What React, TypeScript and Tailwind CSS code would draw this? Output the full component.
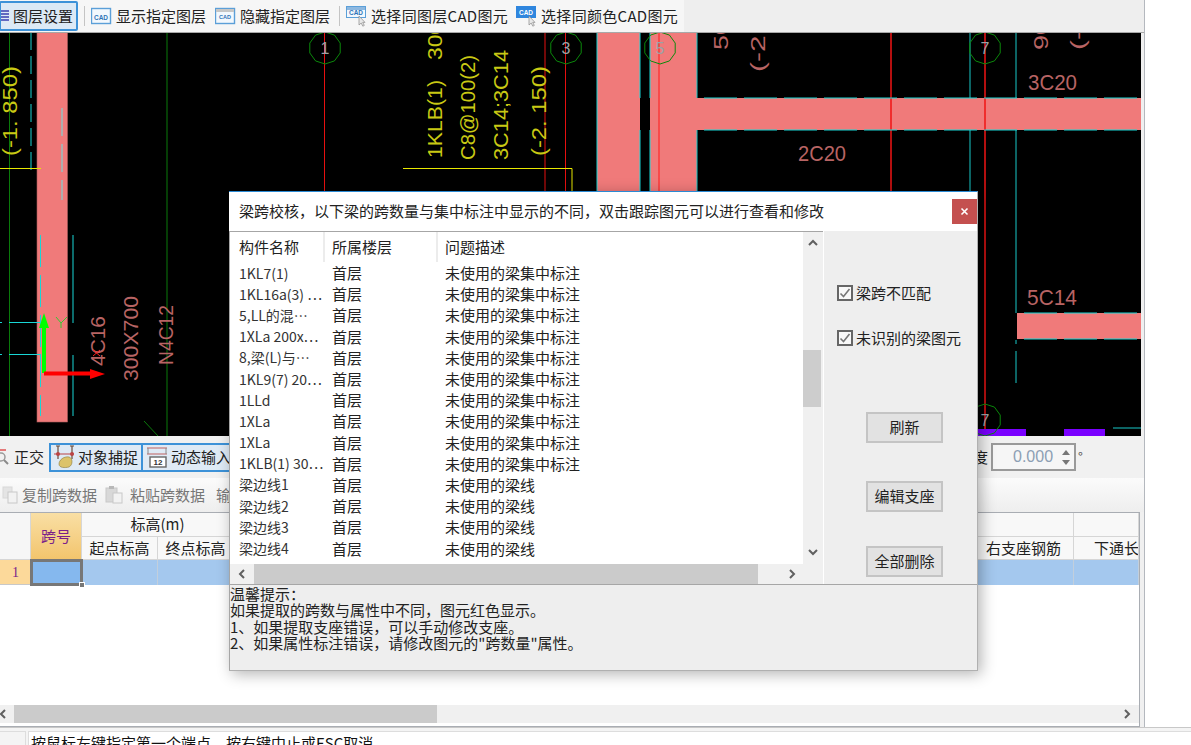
// App.tsx
import React from "react";

const FONT = `"Noto Sans CJK SC", "Noto Sans", sans-serif`;

const rows = [
  ["1KL7(1)", "未使用的梁集中标注"],
  ["1KL16a(3) …", "未使用的梁集中标注"],
  ["5,LL的混…", "未使用的梁集中标注"],
  ["1XLa 200x…", "未使用的梁集中标注"],
  ["8,梁(L)与…", "未使用的梁集中标注"],
  ["1KL9(7) 20…", "未使用的梁集中标注"],
  ["1LLd", "未使用的梁集中标注"],
  ["1XLa", "未使用的梁集中标注"],
  ["1XLa", "未使用的梁集中标注"],
  ["1KLB(1) 30…", "未使用的梁集中标注"],
  ["梁边线1", "未使用的梁线"],
  ["梁边线2", "未使用的梁线"],
  ["梁边线3", "未使用的梁线"],
  ["梁边线4", "未使用的梁线"],
];

function VText({ x, y, len, children, color = "#c9c914", size = 21 }: { x: number; y: number; len: number; children: string; color?: string; size?: number }) {
  return (
    <text
      transform={`rotate(-90 ${x} ${y})`}
      x={x}
      y={y}
      fill={color}
      fontSize={size}
      fontFamily="Liberation Sans, sans-serif"
      textLength={len}
      lengthAdjust="spacingAndGlyphs"
    >
      {children}
    </text>
  );
}

function AxisMark({ cx, cy, n }: { cx: number; cy: number; n: string }) {
  const pts = Array.from({ length: 10 }, (_, i) => {
    const a = (i * Math.PI) / 5 + Math.PI / 10;
    return `${cx + 16 * Math.cos(a)},${cy + 16 * Math.sin(a)}`;
  }).join(" ");
  return (
    <g>
      <polygon points={pts} fill="none" stroke="#0b8a0b" strokeWidth="1" />
      <text x={cx} y={cy + 6} textAnchor="middle" fill="#9aa3a8" fontSize="16" fontFamily="Liberation Sans, sans-serif">
        {n}
      </text>
    </g>
  );
}

function CadDrawing() {
  const dashes = (y: number, from: number, to: number) => (
    <line x1={from} x2={to} y1={y} y2={y} stroke="#19d6d6" strokeWidth="1" strokeDasharray="33 7" />
  );
  return (
    <svg width="1141" height="403" viewBox="0 33 1141 403" className="block bg-black">
      {/* beams */}
      <rect x="37" y="32" width="30.5" height="390" fill="#f07a7a" stroke="#a85a5a" strokeWidth="0.6" />
      <rect x="597" y="32" width="43" height="170" fill="#f07a7a" />
      <rect x="650" y="32" width="47" height="170" fill="#f07a7a" />
      <rect x="697" y="98" width="444" height="32" fill="#f07a7a" />
      <rect x="1017" y="313" width="124" height="26" fill="#f07a7a" />

      {/* grid lines */}
      <line x1="9.5" x2="9.5" y1="32" y2="436" stroke="#0a7a0a" />
      <line x1="167" x2="167" y1="32" y2="436" stroke="#0a7a0a" />
      <line x1="144" y1="421" x2="158" y2="436" stroke="#0a7a0a" />
      <line x1="324.5" x2="324.5" y1="32" y2="200" stroke="#e61010" />
      <line x1="545" x2="545" y1="32" y2="200" stroke="#e61010" />
      <line x1="565.5" x2="565.5" y1="32" y2="200" stroke="#e61010" />
      <line x1="659" x2="659" y1="32" y2="200" stroke="#ff1a1a" />
      <line x1="891" x2="891" y1="32" y2="200" stroke="#f01414" strokeWidth="1.5" />
      <line x1="985" x2="985" y1="32" y2="436" stroke="#f01414" strokeWidth="1.5" />

      {/* cyan edges */}
      <line x1="31" x2="31" y1="32" y2="170" stroke="#19d6d6" strokeDasharray="18 6" />
      <line x1="62" x2="62" y1="108" y2="200" stroke="#6fe0e0" strokeDasharray="28 8" />
      <line x1="40.5" x2="40.5" y1="235" y2="416" stroke="#19d6d6" strokeDasharray="32 8" />
      <line x1="73" x2="73" y1="235" y2="323" stroke="#19d6d6" />
      <line x1="73" x2="73" y1="355" y2="416" stroke="#19d6d6" />
      <line x1="0" x2="41" y1="322.5" y2="322.5" stroke="#19d6d6" strokeDasharray="2 7 40" />
      <line x1="0" x2="41" y1="354.5" y2="354.5" stroke="#19d6d6" strokeDasharray="2 7 40" />
      <line x1="597" x2="597" y1="32" y2="200" stroke="#19d6d6" />
      <line x1="640" x2="640" y1="32" y2="98" stroke="#19d6d6" />
      <line x1="640" x2="640" y1="130" y2="200" stroke="#19d6d6" />
      <line x1="650" x2="650" y1="32" y2="98" stroke="#19d6d6" />
      <line x1="650" x2="650" y1="130" y2="200" stroke="#19d6d6" />
      <line x1="697" x2="697" y1="32" y2="98" stroke="#19c8c8" />
      <line x1="697" x2="697" y1="130" y2="200" stroke="#19c8c8" />
      <line x1="970" x2="970" y1="32" y2="98" stroke="#19c8c8" />
      <line x1="970" x2="970" y1="130" y2="436" stroke="#19c8c8" />
      <line x1="1016" x2="1016" y1="32" y2="98" stroke="#19c8c8" />
      <line x1="1016" x2="1016" y1="130" y2="313" stroke="#19c8c8" />
      <line x1="1016" x2="1016" y1="340" y2="344" stroke="#19c8c8" />
      <line x1="1016" x2="1016" y1="351" y2="383" stroke="#19c8c8" />
      {dashes(98, 704, 1141)}
      {dashes(130, 704, 1141)}
      {dashes(313, 1024, 1141)}
      {dashes(339, 1024, 1141)}
      <line x1="1113" x2="1141" y1="428" y2="428" stroke="#19c8c8" />

      {/* purple strip */}
      <rect x="960" y="429" width="66" height="7" fill="#7a00ff" />
      <rect x="1064" y="429" width="41" height="7" fill="#7a00ff" />

      {/* leader lines */}
      <line x1="0" x2="41" y1="168.5" y2="168.5" stroke="#e8e800" />
      <polyline points="403,168.5 572,168.5 572,195" fill="none" stroke="#e8e800" />

      <AxisMark cx={325} cy={48} n="1" />
      <AxisMark cx={566} cy={48} n="3" />
      <AxisMark cx={660} cy={48} n="5" />
      <AxisMark cx={985} cy={48} n="7" />
      <AxisMark cx={985} cy={420} n="7" />

      {/* annotations */}
      <VText x={17} y={156} len={90}>(-1. 850)</VText>
      <VText x={442} y={158} len={78}>1KLB(1)</VText>
      <VText x={442} y={60} len={38}>300</VText>
      <VText x={475} y={160} len={105}>C8@100(2)</VText>
      <VText x={508} y={160} len={110}>3C14;3C14</VText>
      <VText x={546} y={156} len={90}>(-2. 150)</VText>
      <VText x={728} y={50} len={30} color="#b86464">50</VText>
      <VText x={765} y={72} len={45} color="#b86464">(-2.</VText>
      <VText x={1048} y={50} len={30} color="#b86464">90</VText>
      <VText x={1085} y={50} len={20} color="#b86464">(-</VText>
      <VText x={105} y={366} len={50} color="#b86464">4C16</VText>
      <VText x={138} y={381} len={85} color="#b86464">300X700</VText>
      <VText x={173} y={365} len={60} color="#b86464">N4C12</VText>
      <text x="1028" y="90" fill="#b86464" fontSize="22" fontFamily="Liberation Sans, sans-serif" textLength="49" lengthAdjust="spacingAndGlyphs">3C20</text>
      <text x="798" y="161" fill="#b86464" fontSize="22" fontFamily="Liberation Sans, sans-serif" textLength="48" lengthAdjust="spacingAndGlyphs">2C20</text>
      <text x="1027" y="305" fill="#b86464" fontSize="22" fontFamily="Liberation Sans, sans-serif" textLength="50" lengthAdjust="spacingAndGlyphs">5C14</text>

      {/* UCS axes */}
      <line x1="44" x2="44" y1="373" y2="325" stroke="#00ff00" strokeWidth="4" />
      <polygon points="44,313 39,328 49,328" fill="#00ff00" />
      <polyline points="56,317 61,323 67,317" fill="none" stroke="#33cc33" />
      <line x1="61" x2="61" y1="323" y2="328" stroke="#33cc33" />
      <line x1="44" x2="92" y1="373.5" y2="373.5" stroke="#ff0000" strokeWidth="4" />
      <polygon points="105,374 90,369 90,379" fill="#ff0000" />
      <path d="M93 350l7 6M100 350l-7 6" stroke="#ff2020" fill="none" />
    </svg>
  );
}

function CadIcon({ variant }: { variant: "plain" | "small" | "cursor" | "solid" }) {
  const solid = variant === "solid";
  const cursor = variant === "cursor" || solid;
  return (
    <svg width="21" height="22" viewBox="0 0 21 22" className="shrink-0">
      <rect
        x="0.5"
        y={cursor ? 1.5 : 3.5}
        width="19"
        height={cursor ? 11 : 15}
        fill={solid ? "#2f86de" : "#f3f8fd"}
        stroke={solid ? "#2f86de" : "#5b9fd8"}
        strokeWidth={cursor ? 1 : 1.4}
      />
      {variant === "cursor" && <rect x="1" y="2" width="18" height="3" fill="#8db8e0" />}
      {variant === "small" && <rect x="1" y="4" width="18" height="3" fill="#c6c6c6" />}
      <text
        x="10"
        y={cursor ? 10 : variant === "small" ? 13.5 : 14.5}
        textAnchor="middle"
        fontSize={variant === "small" ? 5.5 : 8}
        fontWeight="bold"
        fill={solid ? "#ffffff" : "#2f74b8"}
        fontFamily="Liberation Sans, sans-serif"
        textLength={variant === "small" ? 12 : 14}
        lengthAdjust="spacingAndGlyphs"
      >
        CAD
      </text>
      {cursor && <path d="M13 11v9l2.2-2 1.6 3.2 1.5-.8-1.6-3H19z" fill="#e8e8e8" stroke="#8a8a8a" strokeWidth="0.7" />}
    </svg>
  );
}

function Chevron({ dir, className = "" }: { dir: "up" | "down" | "left" | "right"; className?: string }) {
  const d = { up: "M2 7l4-4 4 4", down: "M2 4l4 4 4-4", left: "M7 2L3 6l4 4", right: "M4 2l4 4-4 4" }[dir];
  return (
    <svg width="12" height="12" viewBox="0 0 12 12" className={className}>
      <path d={d} fill="none" stroke="#606060" strokeWidth="2" />
    </svg>
  );
}

function Toolbar() {
  return (
    <div className="flex h-[33px] shrink-0 items-center border-b border-[#a8a8a8] bg-[#f6f6f6] text-[15px] text-[#222]">
      <div className="-ml-px flex h-[30px] w-[79px] items-center rounded-[2px] border-2 border-[#3d92d8] bg-[#dce9f5]">
        <svg width="9" height="14" viewBox="0 0 9 14" className="shrink-0">
          <path d="M0 2h8M0 5h8M0 8h8M0 11h8" stroke="#3a3fb0" strokeWidth="1.4" />
        </svg>
        <span className="ml-[3px] whitespace-nowrap">图层设置</span>
      </div>
      <div className="ml-[6px] h-[20px] w-px bg-[#c4c4c4]" />
      <div className="ml-[6px] flex items-center gap-[4px]">
        <CadIcon variant="plain" />
        <span className="whitespace-nowrap">显示指定图层</span>
      </div>
      <div className="ml-[9px] flex items-center gap-[4px]">
        <CadIcon variant="small" />
        <span className="whitespace-nowrap">隐藏指定图层</span>
      </div>
      <div className="ml-[9px] h-[20px] w-px bg-[#c4c4c4]" />
      <div className="ml-[6px] flex items-center gap-[4px]">
        <CadIcon variant="cursor" />
        <span className="whitespace-nowrap tracking-[0.3px]">选择同图层CAD图元</span>
      </div>
      <div className="ml-[8px] flex items-center gap-[4px]">
        <CadIcon variant="solid" />
        <span className="whitespace-nowrap tracking-[0.3px]">选择同颜色CAD图元</span>
      </div>
      <div className="ml-auto h-full w-[460px] bg-[#eeeeee]" />
    </div>
  );
}

function StatusTools() {
  return (
    <div className="flex h-[42px] shrink-0 items-center bg-[#f1f1f1] text-[15px] text-[#222]">
      <svg width="10" height="16" viewBox="0 0 10 16" className="shrink-0">
        <circle cx="1" cy="8" r="4" fill="none" stroke="#9a9a9a" strokeWidth="1.5" />
        <path d="M4 11l4 4" stroke="#8a8a8a" strokeWidth="2" />
        <path d="M0 1h6" stroke="#e47a7a" strokeWidth="2" />
      </svg>
      <span className="ml-[4px] whitespace-nowrap">正交</span>
      <div className="ml-[5px] flex h-[29px] w-[94px] items-center gap-[3px] border-2 border-[#3d92d8] bg-[#dfeaf5] pl-[2px]">
        <svg width="22" height="24" viewBox="0 0 22 24" className="shrink-0">
          <path d="M5 1v13M19 1v13M3 1h4M17 1h4" stroke="#6a4a3a" strokeWidth="1.2" />
          <path d="M1 9h20" stroke="#b44" strokeWidth="1" />
          <circle cx="5" cy="9" r="2" fill="#b44" />
          <circle cx="19" cy="9" r="2" fill="#b44" />
          <path d="M6 19c0-4 5-8 10-7 4 1 4 8 0 10-4 1-10 1-10-3z" fill="#dcc36a" stroke="#8a7a40" strokeWidth="0.6" />
        </svg>
        <span className="whitespace-nowrap">对象捕捉</span>
      </div>
      <div className="flex h-[29px] w-[88px] items-center gap-[3px] border-y-2 border-[#3d92d8] bg-[#dfeaf5] pl-[3px]">
        <svg width="22" height="22" viewBox="0 0 22 22" className="shrink-0">
          <path d="M1 2h20M1 8h20" stroke="#c06060" strokeWidth="1.2" />
          <path d="M2 2v6M20 2v6" stroke="#888" />
          <rect x="4" y="11" width="16" height="10" fill="#fff" stroke="#666" strokeWidth="1.4" />
          <text x="12" y="19" textAnchor="middle" fontSize="8" fontWeight="bold" fill="#333" fontFamily="Liberation Sans, sans-serif">12</text>
        </svg>
        <span className="whitespace-nowrap">动态输入</span>
      </div>
      <span className="ml-auto whitespace-nowrap">旋转角度</span>
      <div className="ml-[3px] flex h-[28px] w-[85px] items-center justify-between border-2 border-[#9a9a9a] bg-[#f6f6f6] pl-[20px] pr-[4px]">
        <span className="text-[16px] text-[#8d9fb4]" style={{ fontFamily: "Liberation Sans, sans-serif" }}>0.000</span>
        <span className="flex flex-col gap-[5px]">
          <span className="h-0 w-0 border-x-[4px] border-b-[5px] border-x-transparent border-b-[#777]" />
          <span className="h-0 w-0 border-x-[4px] border-t-[5px] border-x-transparent border-t-[#777]" />
        </span>
      </div>
      <span className="ml-[2px] w-[66px] text-[13px] text-[#555]">°</span>
    </div>
  );
}

function DataBar() {
  return (
    <div className="flex h-[34px] shrink-0 items-center bg-gradient-to-b from-[#fbfbfb] to-[#eeeeee] text-[15px] text-[#777]">
      <svg width="18" height="18" viewBox="0 0 18 18" className="ml-[2px] shrink-0">
        <rect x="1" y="1" width="9" height="11" fill="#e4e4e4" stroke="#d8d8d8" />
        <rect x="6" y="6" width="9" height="11" fill="#f2f2f2" stroke="#c8c8c8" />
      </svg>
      <span className="ml-[2px] whitespace-nowrap">复制跨数据</span>
      <svg width="20" height="18" viewBox="0 0 20 18" className="ml-[8px] shrink-0">
        <rect x="1" y="2" width="11" height="14" fill="#d8d8d8" stroke="#c8c8c8" />
        <rect x="4" y="0" width="5" height="3" fill="#b8b8b8" />
        <rect x="8" y="7" width="9" height="10" fill="#f2f2f2" stroke="#c8c8c8" />
      </svg>
      <span className="ml-[5px] whitespace-nowrap">粘贴跨数据</span>
      <span className="ml-[11px] whitespace-nowrap">输入当前列数据</span>
    </div>
  );
}

function BeamTable() {
  const head = "flex items-center justify-center bg-[#f8f8f8] border-r border-b border-[#d6d6d6] text-[15px] text-[#222] whitespace-nowrap";
  const cell = "bg-[#a4c8ee] border-r border-[#c2cfdc]";
  return (
    <div className="mr-[4px] flex flex-1 flex-col border border-l-0 border-[#a9adb3] bg-white">
      <div className="grid flex-1 grid-cols-[31px_51px_76px_76px_1fr_100px_65px] grid-rows-[24px_23px_25px_1fr]">
        <div className="row-span-2 border-r border-b border-[#d6d6d6] bg-[#f6f6f6]" />
        <div className="row-span-2 flex items-center justify-center border-r border-[#d6d6d6] bg-gradient-to-b from-[#f9dfa4] to-[#f2c46b] text-[15px] text-[#7a1f8a]">跨号</div>
        <div className={`${head} col-span-2`}>标高(m)</div>
        <div className={head} />
        <div className={head} />
        <div className={head} />
        <div className={head}>起点标高</div>
        <div className={head}>终点标高</div>
        <div className={head} />
        <div className={head}>右支座钢筋</div>
        <div className={`${head} justify-start overflow-hidden pl-[20px]`}>下通长筋</div>
        <div className="flex items-center justify-center border-b border-[#c8c8c8] bg-[#fcd99a] text-[14px] text-[#7a1f8a]" style={{ fontFamily: "Liberation Serif, serif" }}>1</div>
        <div className="relative -m-px border-[3px] border-[#777777] bg-[#85b8ee]">
          <span className="absolute -bottom-[5px] -right-[5px] h-[6px] w-[6px] border border-white bg-[#777777]" />
        </div>
        <div className={cell} />
        <div className={cell} />
        <div className={cell} />
        <div className={cell} />
        <div className={cell} />
        <div className="col-span-7 bg-white" />
      </div>
      <div className="flex h-[18px] shrink-0 items-center bg-[#f0f0f0]">
        <Chevron dir="left" className="-ml-[2px] shrink-0" />
        <div className="ml-[4px] h-full w-[423px] bg-[#cbcbcb]" />
        <Chevron dir="right" className="ml-auto mr-[6px] shrink-0" />
      </div>
      <div className="h-[3px] shrink-0 bg-white" />
    </div>
  );
}

function CheckItem({ label, className = "" }: { label: string; className?: string }) {
  return (
    <div className={`flex items-center gap-[3px] text-[15px] text-[#222] ${className}`}>
      <span className="flex h-[16px] w-[16px] shrink-0 items-center justify-center border-2 border-[#666] bg-[#f8f8f8]">
        <svg width="12" height="12" viewBox="0 0 12 12">
          <path d="M1.5 6.5l3 3 6-7.5" fill="none" stroke="#777" strokeWidth="1.6" />
        </svg>
      </span>
      <span className="whitespace-nowrap">{label}</span>
    </div>
  );
}

function DialogButton({ label, className = "" }: { label: string; className?: string }) {
  return (
    <div className={`ml-[42px] flex h-[31px] w-[77px] items-center justify-center border-2 border-[#c4c4c4] bg-[#e2e2e2] text-[15px] text-[#222] ${className}`}>
      {label}
    </div>
  );
}

function SpanCheckDialog() {
  return (
    <div className="absolute left-[229px] top-[191px] flex h-[480px] w-[749px] flex-col border-t border-r border-b border-t-[#2a8ad4] border-r-[#b0b0b0] border-b-[#b0b0b0] bg-[#eeeeee] text-[15px] text-[#222] shadow-[3px_3px_14px_rgba(0,0,0,0.3)]">
      <div className="flex h-[39px] shrink-0 items-center bg-white pl-[10px]">
        <span className="whitespace-nowrap">梁跨校核，以下梁的跨数量与集中标注中显示的不同，双击跟踪图元可以进行查看和修改</span>
        <div className="ml-auto flex h-[25px] w-[25px] items-center justify-center bg-[#c4504f]">
          <svg width="9" height="9" viewBox="0 0 9 9">
            <path d="M1.5 1.5l6 6M7.5 1.5l-6 6" stroke="#fff" strokeWidth="1.6" />
          </svg>
        </div>
      </div>
      <div className="flex h-[353px] shrink-0">
        <div className="flex w-[594px] flex-col border-l border-t border-[#a6a6a6] bg-white">
          <div className="flex min-h-0 flex-1">
            <div className="flex min-w-0 flex-1 flex-col">
              <div className="flex h-[30px] shrink-0 items-center">
                <div className="flex h-full w-[95px] items-center border-r-2 border-[#ececec] pl-[9px]">构件名称</div>
                <div className="flex h-full w-[113px] items-center border-r-2 border-[#ececec] pl-[7px]">所属楼层</div>
                <div className="pl-[7px]">问题描述</div>
              </div>
              {rows.map((r, i) => (
                <div key={i} className="flex h-[21.2px] shrink-0 items-center leading-none">
                  <div className="w-[95px] whitespace-nowrap pl-[9px] text-[14px] text-[#333]">{r[0]}</div>
                  <div className="w-[113px] pl-[7px]">首层</div>
                  <div className="whitespace-nowrap pl-[7px]">{r[1]}</div>
                </div>
              ))}
            </div>
            <div className="relative flex w-[20px] shrink-0 flex-col items-center justify-between bg-[#f0f0f0] py-[6px]">
              <Chevron dir="up" />
              <div className="absolute left-0 top-[118px] h-[57px] w-[18px] bg-[#cdcdcd]" />
              <Chevron dir="down" />
            </div>
          </div>
          <div className="flex h-[20px] shrink-0 items-center bg-[#f0f0f0]">
            <Chevron dir="left" className="ml-[7px] shrink-0" />
            <div className="ml-[5px] h-full w-[504px] bg-[#cbcbcb]" />
            <Chevron dir="right" className="ml-[28px] shrink-0" />
          </div>
        </div>
        <div className="flex-1 border-l border-white">
          <CheckItem label="梁跨不匹配" className="ml-[13px] mt-[51px]" />
          <CheckItem label="未识别的梁图元" className="ml-[13px] mt-[22px]" />
          <DialogButton label="刷新" className="mt-[63px]" />
          <DialogButton label="编辑支座" className="mt-[38px]" />
          <DialogButton label="全部删除" className="mt-[34px]" />
        </div>
      </div>
      <div className="flex-1 border-t border-l border-[#a6a6a6] pt-[1px] text-[15px] leading-[16.3px]">
        <div>温馨提示：</div>
        <div>如果提取的跨数与属性中不同，图元红色显示。</div>
        <div>1、如果提取支座错误，可以手动修改支座。</div>
        <div>2、如果属性标注错误，请修改图元的"跨数量"属性。</div>
      </div>
    </div>
  );
}

export default function App() {
  return (
    <div className="relative h-[745px] w-[1191px] overflow-hidden bg-white" style={{ fontFamily: FONT }}>
      <div className="flex h-[727px] w-[1145px] flex-col border-r border-[#b4b8be] bg-[#f0f0f0]">
        <Toolbar />
        <CadDrawing />
        <StatusTools />
        <DataBar />
        <BeamTable />
      </div>
      <div className="flex h-[18px] overflow-hidden border-t border-[#c8c8c8] bg-[#f4f4f4] pt-[3px]">
        <div className="w-[26px] shrink-0 border-r border-t border-[#dddddd]" />
        <div className="ml-[2px] flex-1 border-l border-t border-[#dddddd] bg-white pl-[2px] text-[15px] leading-[22px] text-[#111]">
          按鼠标左键指定第一个端点，按右键中止或ESC取消
        </div>
      </div>
      <SpanCheckDialog />
    </div>
  );
}
